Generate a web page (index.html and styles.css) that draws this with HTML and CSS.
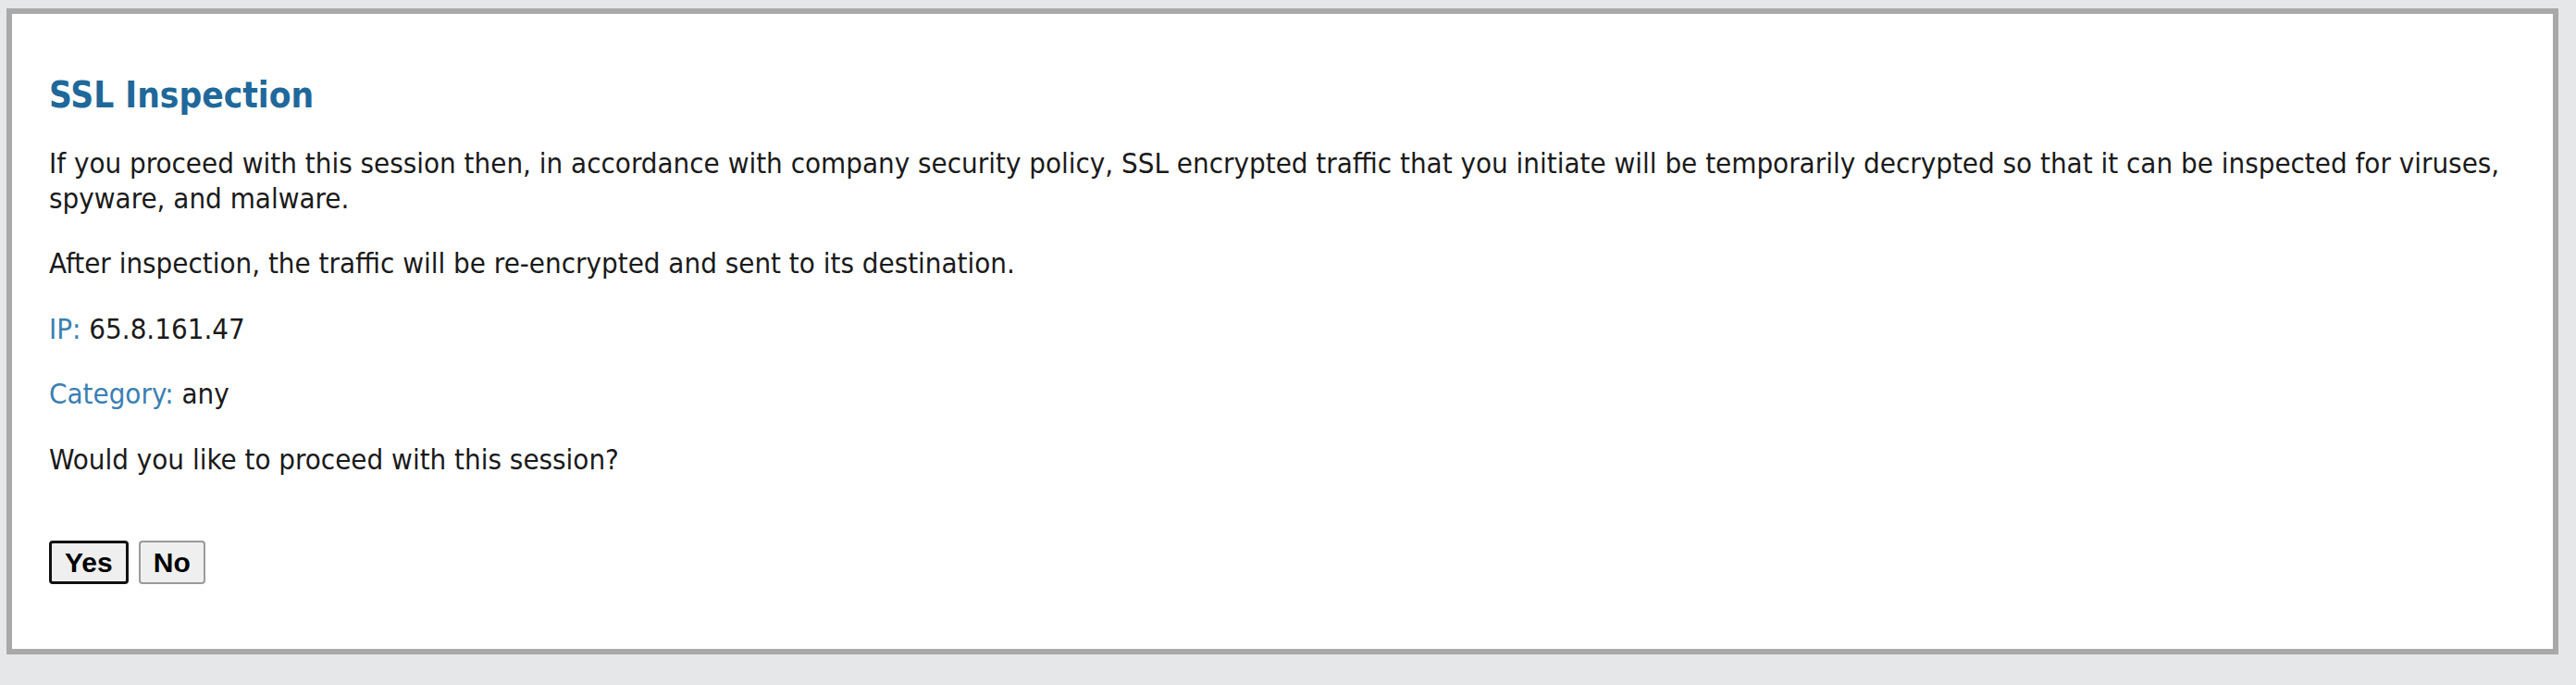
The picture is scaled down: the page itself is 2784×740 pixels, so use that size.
FILE: index.html
```html
<!DOCTYPE html>
<html lang="en">
<head>
  <meta charset="UTF-8">
  <meta name="viewport" content="width=device-width, initial-scale=1.0">
  <title>SSL Inspection</title>
  <link rel="stylesheet" href="styles.css">
</head>
<body>
  <div class="panel">
    <h1 class="title">SSL Inspection</h1>

    <p>If you proceed with this session then, in accordance with company security policy, SSL encrypted traffic that you initiate will be temporarily decrypted so that it can be inspected for viruses, spyware, and malware.</p>
    <p>After inspection, the traffic will be re-encrypted and sent to its destination.</p>
    <p><span class="label">IP:</span> 65.8.161.47</p>
    <p><span class="label">Category:</span> any</p>
    <p>Would you like to proceed with this session?</p>

    <!-- Answer -->
    <div class="actions">
      <button class="button button-default" autofocus>Yes</button>
      <button class="button">No</button>
    </div>
  </div>
</body>
</html>
```

FILE: styles.css
```css
/* General Styling */
body {
  margin: 0;
  padding: 9px 19px 0 7px;
  background: #e6e7e9;
  font-family: "DejaVu Sans Condensed", "DejaVu Sans", sans-serif;
  font-stretch: condensed;
  color: #1a1a1a;
}

/* Panel */
.panel {
  background: #ffffff;
  border: 6px solid #a9a9a9;
  padding: 66px 40px 70px 40px;
}

/* Header */
.title {
  font-size: 38.5px;
  line-height: 44px;
  font-weight: bold;
  color: #20689a;
  margin: 0 0 33px 0;
}

p {
  font-size: 31px;
  line-height: 37.5px;
  margin: 0 0 33px 0;
}

.label {
  color: #3a7fb3;
}

/* Buttons */
.actions {
  display: flex;
  gap: 11px;
  margin-top: 69px;
}

.button {
  font-family: "Liberation Sans", Arial, sans-serif;
  font-weight: bold;
  font-size: 30px;
  height: 47px;
  padding: 0 14px;
  background: #efefef;
  color: #000;
  border: 2px solid #9a9a9a;
  border-radius: 4px;
}

.button-default {
  border: 3px solid #111;
  outline: none;
}
```
